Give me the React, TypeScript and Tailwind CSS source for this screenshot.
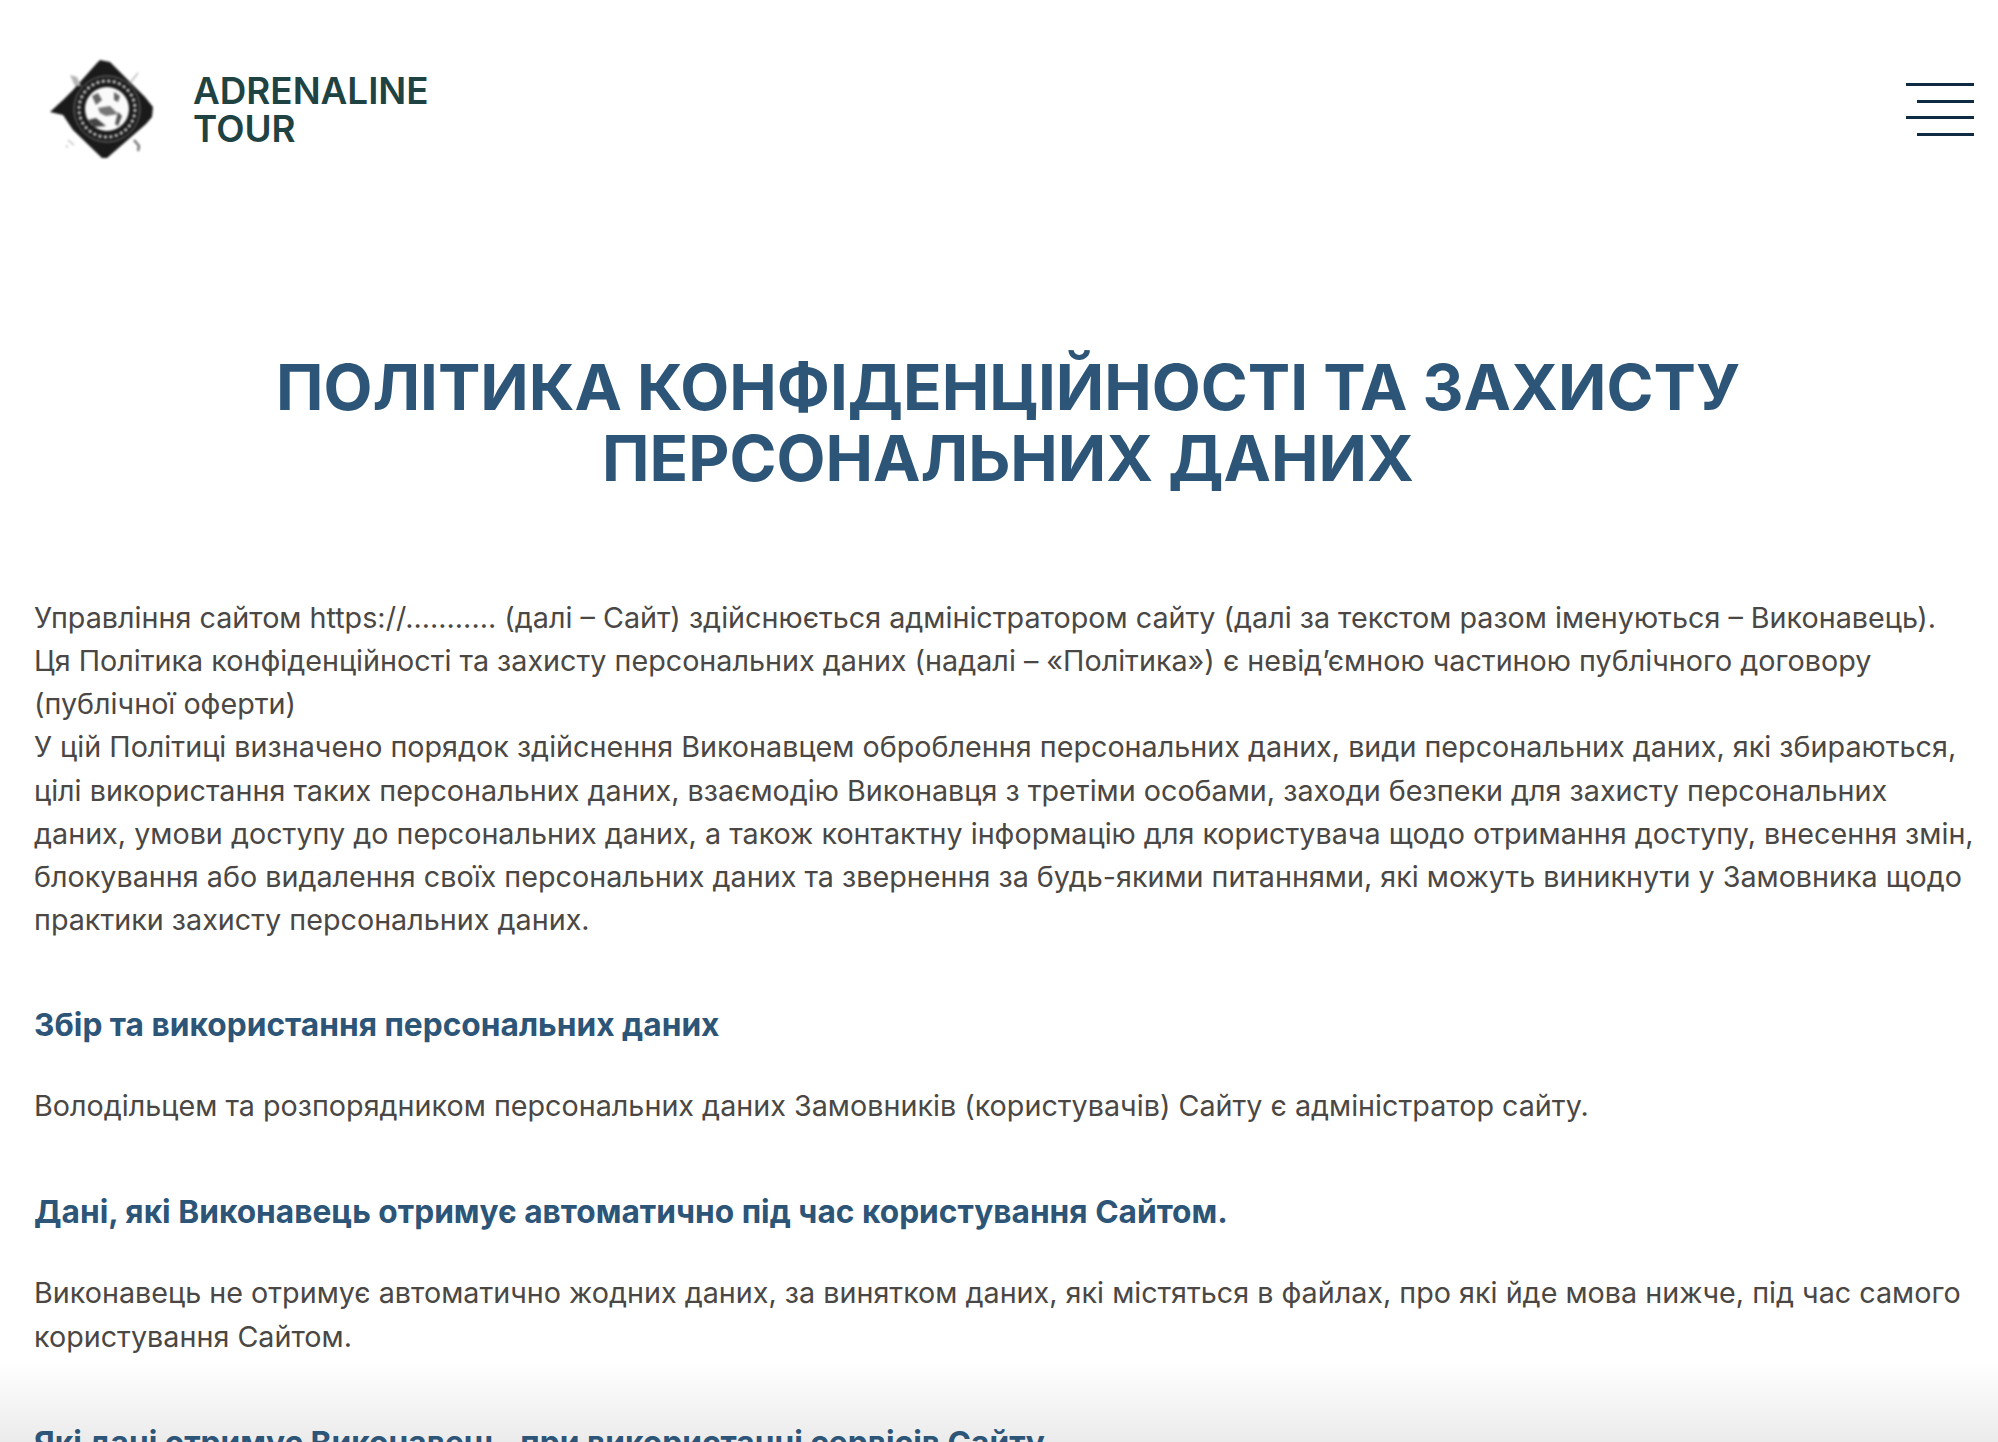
import React from "react";

const Logo = () => (
  <svg width="130" height="115" viewBox="0 2 130 115" className="blur-[1px] shrink-0">
    {/* outer diamond */}
    <path d="M70 10 L80 12 L115 47 L123 57 L122 67 L116 74 L77 108 L72 108 L43 80 L33 65 L20 62 L33 50 L43 40 L67 13 Z" fill="#1a1a1a" />
    {/* small corner marks */}
    <path d="M40 25 L47 27 L51 36 L45 36 Z" fill="#b4b4b4" />
    <path d="M108 23 L100 33" stroke="#bbbbbb" strokeWidth="1.5" />
    <path d="M38 90 L44 95 M36 96 L38 97" stroke="#bdbdbd" strokeWidth="1.5" />
    <path d="M104 90 L109 96 L108 101" stroke="#777777" strokeWidth="2.5" fill="none" />
    {/* seal rings and lettering band */}
    <circle cx="77" cy="59" r="33" fill="none" stroke="#777777" strokeWidth="1" />
    <circle cx="77" cy="59" r="28" fill="none" stroke="#c4c4c4" strokeWidth="3" strokeDasharray="3 2.5" />
    <circle cx="77" cy="59" r="22" fill="#fafafa" />
    {/* globe land */}
    <path d="M62 46 L68 43 L72 50 L66 55 Z M84 42 L90 46 L88 52 L84 50 Z" fill="#666666" />
    <path d="M68 58 L80 56 L88 64 L76 66 L70 63 Z" fill="#777777" />
    <path d="M58 70 L66 68 L76 76 L64 77 Z" fill="#444444" />
    <path d="M88 62 L92 66 L88 76 L85 74 Z" fill="#555555" />
  </svg>
);

const MenuIcon = () => (
  <div className="flex flex-col items-end gap-[13.5px] w-[68px]">
    <span className="block h-[3px] w-[68px] bg-[#0f2a43]" />
    <span className="block h-[3px] w-[57px] bg-[#0f2a43]" />
    <span className="block h-[3px] w-[68px] bg-[#0f2a43]" />
    <span className="block h-[3px] w-[57px] bg-[#0f2a43]" />
  </div>
);

const SectionTitle = ({ children, className }: { children: React.ReactNode; className: string }) => (
  <h2 className={`text-[31.7px] leading-[43px] font-bold text-[#2c5578] ${className}`}>{children}</h2>
);

const Paragraph = ({ children }: { children: React.ReactNode }) => (
  <p className="text-[28.72px] leading-[43.15px] text-[#4a4744] mt-[38px]">{children}</p>
);

export default function App() {
  return (
    <div className="relative h-[1442px] w-full overflow-hidden bg-white font-['Inter',sans-serif]">
      {/* grey fade sits behind the text */}
      <div className="absolute bottom-0 left-0 right-0 h-[80px] bg-gradient-to-b from-white to-[#ebebeb]" />

      <div className="relative">
        <header className="flex items-center justify-between pl-[30px] pr-[24px] pt-[52px]">
          <div className="flex items-center gap-[33px]">
            <Logo />
            <div className="text-[36.8px] leading-[38px] font-semibold text-[#1f4242]">
              ADRENALINE
              <br />
              TOUR
            </div>
          </div>
          <MenuIcon />
        </header>

        <main className="pl-[34px] pr-[16px]">
          <h1 className="mt-[184px] text-center text-[63.6px] leading-[71px] font-bold text-[#2c5578]">
            ПОЛІТИКА КОНФІДЕНЦІЙНОСТІ ТА ЗАХИСТУ
            <br />
            ПЕРСОНАЛЬНИХ ДАНИХ
          </h1>

          <p className="mt-[103px] text-[28.72px] leading-[43.15px] text-[#4a4744]">
            Управління сайтом https://........... (далі – Сайт) здійснюється адміністратором сайту (далі за текстом разом іменуються – Виконавець).
            <br />
            Ця Політика конфіденційності та захисту персональних даних (надалі – «Політика») є невід’ємною частиною публічного договору (публічної оферти)
            <br />
            У цій Політиці визначено порядок здійснення Виконавцем оброблення персональних даних, види персональних даних, які збираються, цілі використання таких персональних даних, взаємодію Виконавця з третіми особами, заходи безпеки для захисту персональних даних, умови доступу до персональних даних, а також контактну інформацію для користувача щодо отримання доступу, внесення змін, блокування або видалення своїх персональних даних та звернення за будь-якими питаннями, які можуть виникнути у Замовника щодо практики захисту персональних даних.
          </p>

          <SectionTitle className="mt-[62px]">Збір та використання персональних даних</SectionTitle>
          <Paragraph>Володільцем та розпорядником персональних даних Замовників (користувачів) Сайту є адміністратор сайту.</Paragraph>

          <SectionTitle className="mt-[63px]">Дані, які Виконавець отримує автоматично під час користування Сайтом.</SectionTitle>
          <Paragraph>Виконавець не отримує автоматично жодних даних, за винятком даних, які містяться в файлах, про які йде мова нижче, під час самого користування Сайтом.</Paragraph>

          <SectionTitle className="mt-[63px]">Які дані отримує Виконавець, при використанні сервісів Сайту</SectionTitle>
        </main>
      </div>
    </div>
  );
}
